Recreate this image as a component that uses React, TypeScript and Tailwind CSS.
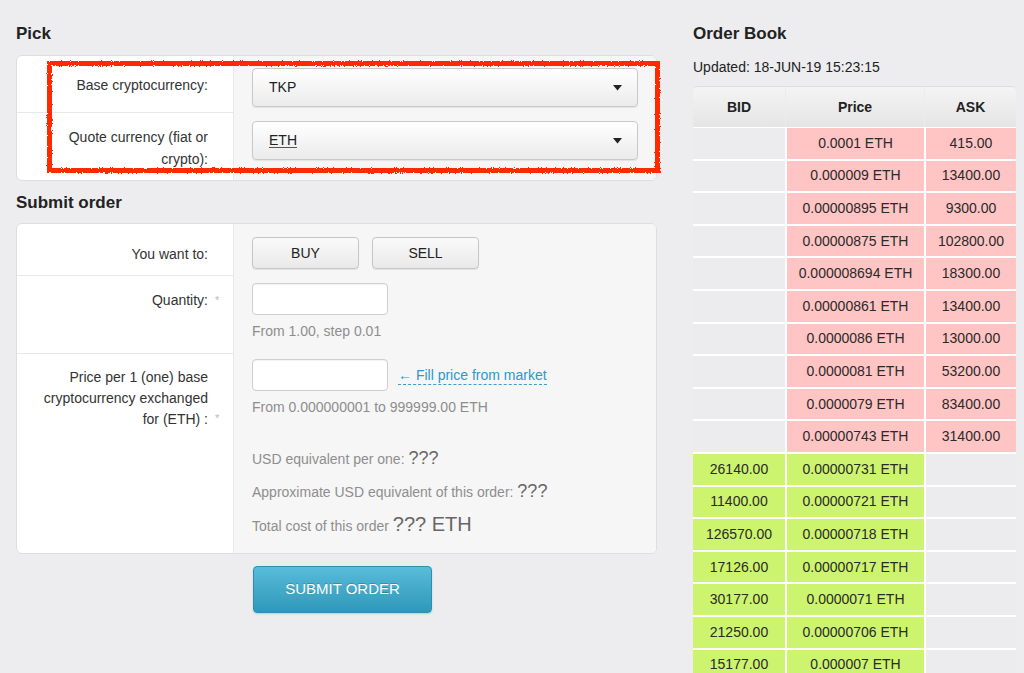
import React from 'react';

const asks = [
  ['0.0001 ETH', '415.00'],
  ['0.000009 ETH', '13400.00'],
  ['0.00000895 ETH', '9300.00'],
  ['0.00000875 ETH', '102800.00'],
  ['0.000008694 ETH', '18300.00'],
  ['0.00000861 ETH', '13400.00'],
  ['0.0000086 ETH', '13000.00'],
  ['0.0000081 ETH', '53200.00'],
  ['0.0000079 ETH', '83400.00'],
  ['0.00000743 ETH', '31400.00'],
];

const bids = [
  ['26140.00', '0.00000731 ETH'],
  ['11400.00', '0.00000721 ETH'],
  ['126570.00', '0.00000718 ETH'],
  ['17126.00', '0.00000717 ETH'],
  ['30177.00', '0.0000071 ETH'],
  ['21250.00', '0.00000706 ETH'],
  ['15177.00', '0.000007 ETH'],
];

function Required() {
  return (
    <span className="relative">
      <span className="absolute left-[7px] top-[-3px] text-[11px] text-[#bbb]">*</span>
    </span>
  );
}

function Select({ value, underline }: { value: string; underline?: boolean }) {
  return (
    <div className="flex h-[39px] items-center justify-between rounded-[4px] border border-[#c9c9c9] bg-gradient-to-b from-white to-[#ebebeb] pl-4 pr-[15px] text-[14px] text-[#222] shadow-[0_1px_1px_rgba(0,0,0,0.08)]">
      <span className={underline ? 'underline decoration-[#555] underline-offset-2' : ''}>{value}</span>
      <svg width="9" height="6" viewBox="0 0 9 6">
        <path d="M0 0 L9 0 L4.5 5.5 Z" fill="#222" />
      </svg>
    </div>
  );
}

function GrayButton({ children }: { children: React.ReactNode }) {
  return (
    <button className="h-[32px] w-[107px] rounded-[4px] border border-[#c6c6c6] bg-gradient-to-b from-[#fafafa] to-[#e9e9e9] text-[14px] text-[#222] shadow-[0_1px_1px_rgba(0,0,0,0.08)]">
      {children}
    </button>
  );
}

function TextInput() {
  return (
    <div className="h-[32px] w-[136px] rounded-[4px] border border-[#cfcfcf] bg-white shadow-[inset_0_1px_1px_rgba(0,0,0,0.05)]" />
  );
}

function Cell({ children, tone }: { children?: React.ReactNode; tone: 'ask' | 'bid' | 'empty' }) {
  const bg = tone === 'ask' ? 'bg-[#ffc4c4]' : tone === 'bid' ? 'bg-[#cdf46e]' : 'bg-[#ececee]';
  return (
    <div className={`flex h-[30.6px] items-center justify-center text-[14px] text-[#2a2a2a] ${bg}`}>
      {children}
    </div>
  );
}

export default function App() {
  return (
    <div className="h-[673px] overflow-hidden bg-[#ededef] font-['Liberation_Sans',Arial,sans-serif] text-[#333]">
      <svg width="0" height="0" className="absolute">
        <filter id="rough">
          <feTurbulence type="fractalNoise" baseFrequency="0.9" numOctaves="2" seed="3" />
          <feDisplacementMap in="SourceGraphic" scale="3" />
        </filter>
      </svg>
      <div className="flex gap-9 pl-4 pt-5">
        {/* left column */}
        <div className="w-[641px]">
          <h2 className="h-[35px] text-[17px] font-bold leading-[28px] text-[#222]">Pick</h2>
          <div className="relative">
            <div className="flex overflow-hidden rounded-[6px] border border-[#dedede] bg-white">
              <div className="w-[216px] text-[14px] leading-[22px]">
                <div className="h-[57px] border-b border-[#e8e8e8] pl-2 pr-[25px] pt-[18px] text-right">Base cryptocurrency:</div>
                <div className="h-[67px] pl-2 pr-[25px] pt-[13px] text-right">Quote currency (fiat or crypto):</div>
              </div>
              <div className="flex-1 border-l border-[#e9e9e9] bg-[#f6f6f6] pl-[18px] pr-[18px] pt-[12px]">
                <Select value="TKP" />
                <div className="mt-[14px]">
                  <Select value="ETH" underline />
                </div>
              </div>
            </div>
            <div className="pointer-events-none absolute bottom-[8px] left-[31px] right-[-3px] top-[6px] border-[5px] border-[#ff2a00] [filter:url(#rough)]" />
          </div>

          <h2 className="h-[42px] pt-2 text-[17px] font-bold leading-[28px] text-[#222]">Submit order</h2>
          <div className="flex overflow-hidden rounded-[6px] border border-[#dedede] bg-white">
            <div className="w-[216px] text-[14px] leading-[22px]">
              <div className="h-[52px] border-b border-[#e8e8e8] pl-3 pr-[25px] pt-[19px] text-right">You want to:</div>
              <div className="h-[78px] border-b border-[#e8e8e8] pl-3 pr-[25px] pt-[13px] text-right">
                Quantity:<Required />
              </div>
              <div className="pl-3 pr-[25px] pt-[13px] text-right leading-[21px]">
                Price per 1 (one) base cryptocurrency exchanged for (ETH) :<Required />
              </div>
            </div>
            <div className="flex-1 border-l border-[#e9e9e9] bg-[#f6f6f6] pb-[18px] pl-[18px] pt-[13px] text-[14px] text-[#8e8e8e]">
              <div className="flex gap-[13px]">
                <GrayButton>BUY</GrayButton>
                <GrayButton>SELL</GrayButton>
              </div>
              <div className="mt-[14px]">
                <TextInput />
              </div>
              <div className="mt-[5px] leading-[22px]">From 1.00, step 0.01</div>
              <div className="mt-[17px] flex items-center gap-[10px]">
                <TextInput />
                <span className="border-b border-dashed border-[#3a9fd0] leading-[18px] text-[#2e98cc]">← Fill price from market</span>
              </div>
              <div className="mt-[5px] leading-[22px]">From 0.000000001 to 999999.00 ETH</div>
              <div className="mt-[29px] flex flex-col gap-[11px] leading-[22px]">
                <div className="h-[22px]">
                  USD equivalent per one: <span className="text-[18px] text-[#666]">???</span>
                </div>
                <div className="h-[22px]">
                  Approximate USD equivalent of this order: <span className="text-[18px] text-[#666]">???</span>
                </div>
                <div className="h-[22px]">
                  Total cost of this order <span className="text-[20px] text-[#666]">??? ETH</span>
                </div>
              </div>
            </div>
          </div>

          <div className="mt-[12px] pl-[237px]">
            <button className="h-[47px] w-[179px] rounded-[4px] border border-[#2b8fae] bg-gradient-to-b from-[#58bcdb] to-[#2e98b8] text-[15px] text-white [text-shadow:0_-1px_0_rgba(0,0,0,0.2)] shadow-[0_1px_2px_rgba(0,0,0,0.15)]">
              SUBMIT ORDER
            </button>
          </div>
        </div>

        {/* right column */}
        <div className="w-[323px]">
          <h2 className="h-[35px] text-[17px] font-bold leading-[28px] text-[#222]">Order Book</h2>
          <div className="h-[31px] text-[14px] leading-[24px] text-[#222]">Updated: 18-JUN-19 15:23:15</div>
          <div className="overflow-hidden rounded-t-[5px] border-t border-[#dcdcdc]">
            <div className="grid h-[40px] grid-cols-[93px_139px_91px] bg-gradient-to-b from-[#f4f4f4] to-[#e5e5e6] text-[14px] font-bold text-[#222]">
              {['BID', 'Price', 'ASK'].map((h) => (
                <div key={h} className="flex items-center justify-center border-r border-[#ececec] last:border-r-0">
                  {h}
                </div>
              ))}
            </div>
            <div className="grid grid-cols-[92px_137px_90px] gap-[2px] bg-white pt-[1px]">
              {asks.map(([price, ask]) => (
                <React.Fragment key={price}>
                  <Cell tone="empty" />
                  <Cell tone="ask">{price}</Cell>
                  <Cell tone="ask">{ask}</Cell>
                </React.Fragment>
              ))}
              {bids.map(([bid, price]) => (
                <React.Fragment key={price}>
                  <Cell tone="bid">{bid}</Cell>
                  <Cell tone="bid">{price}</Cell>
                  <Cell tone="empty" />
                </React.Fragment>
              ))}
            </div>
          </div>
        </div>
      </div>
    </div>
  );
}
